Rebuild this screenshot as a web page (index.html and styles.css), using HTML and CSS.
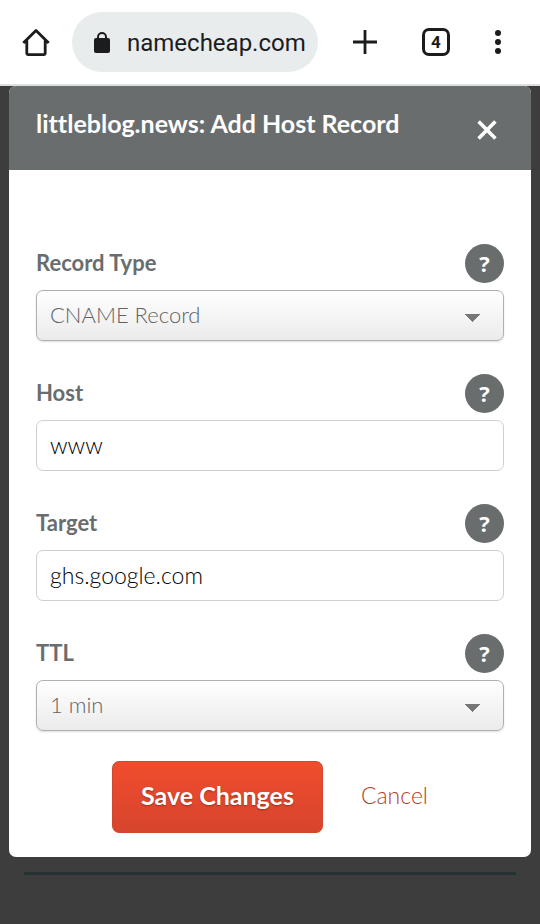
FILE: index.html
```html
<!DOCTYPE html>
<html lang="en">
<head>
<meta charset="utf-8">
<meta name="viewport" content="width=device-width, initial-scale=1">
<title>Add Host Record</title>
<link rel="stylesheet" href="styles.css">
</head>
<body>
<header class="browser-bar">
  <button class="bar-button" type="button" aria-label="Home">
    <svg width="28" height="28" viewBox="0 0 28 28" fill="none" stroke="#1b1c1d" stroke-width="2.8" stroke-linejoin="round"><path d="M1.3 15 14 2.6 26.7 15M4.8 12.5V25q0 1.6 1.6 1.6h15.2q1.6 0 1.6-1.6V12.5"/></svg>
  </button>
  <button class="address" type="button">
    <svg width="16" height="22" viewBox="0 0 16 22"><path d="M4 8V5a4 4 0 0 1 8 0V8" fill="none" stroke="#1b1c1d" stroke-width="2"/><rect y="6" width="16" height="15" rx="2" fill="#1b1c1d"/></svg>
    <span>namecheap.com</span>
  </button>
  <div class="bar-actions">
    <button class="bar-button" type="button" aria-label="New tab">
      <svg width="24" height="24" viewBox="0 0 24 24" stroke="#1b1c1d" stroke-width="2.8"><path d="M12 0v24M0 12h24"/></svg>
    </button>
    <button class="bar-button tabs" type="button" aria-label="Open tabs">4</button>
    <button class="bar-button" type="button" aria-label="Menu">
      <svg width="6" height="24" viewBox="0 0 6 24" fill="#1b1c1d"><circle cx="3" cy="3" r="3"/><circle cx="3" cy="12" r="3"/><circle cx="3" cy="21" r="3"/></svg>
    </button>
  </div>
</header>
<main class="page">
  <form class="dialog">
    <div class="dialog-header">
      <h1>littleblog.news: Add Host Record</h1>
      <button class="close" type="button" aria-label="Close">
        <svg width="20" height="20" viewBox="0 0 20 20" stroke="#fff" stroke-width="3.6"><path d="m1.6 1.6 16.8 16.8m0-16.8L1.6 18.4"/></svg>
      </button>
    </div>
    <div class="dialog-body">
      <div class="fields">
        <div class="field">
          <div class="field-top"><label for="type">Record Type</label><button class="help" type="button">?</button></div>
          <select class="control" id="type"><option>CNAME Record</option></select>
        </div>
        <div class="field">
          <div class="field-top"><label for="host">Host</label><button class="help" type="button">?</button></div>
          <input class="control" id="host" type="text" value="www">
        </div>
        <div class="field">
          <div class="field-top"><label for="target">Target</label><button class="help" type="button">?</button></div>
          <input class="control" id="target" type="text" value="ghs.google.com">
        </div>
        <div class="field">
          <div class="field-top"><label for="ttl">TTL</label><button class="help" type="button">?</button></div>
          <select class="control" id="ttl"><option>1 min</option></select>
        </div>
      </div>
      <div class="actions">
        <button class="save" type="submit">Save Changes</button>
        <a class="cancel" href="#">Cancel</a>
      </div>
    </div>
  </form>
  <hr class="divider">
</main>
</body>
</html>
```
FILE: styles.css
```css
* { box-sizing: border-box; }

body {
  margin: 0;
  min-height: 100vh;
  background: #3d3d3d;
  font-family: Lato, "Open Sans", sans-serif;
  font-variant-ligatures: none;
}

button { border: 0; padding: 0; background: none; font-family: inherit; cursor: pointer; }
svg { display: block; }

.browser-bar {
  display: flex;
  align-items: center;
  padding: 12px 39px 12px 22px;
  background: #fff;
  border-bottom: 2px solid #dcdedf;
}

.bar-button { flex: none; }

.address {
  display: flex;
  flex: 1;
  align-items: center;
  gap: 17px;
  height: 60px;
  margin-left: 22px;
  padding: 2px 12px 0 22px;
  border-radius: 30px;
  background: #e8eced;
  color: #1b1c1d;
  font: 24px Roboto, sans-serif;
}

.bar-actions {
  display: grid;
  grid-template-columns: 24px 28px 6px;
  align-items: center;
  column-gap: 45px;
  margin-left: 35px;
}

.tabs {
  width: 28px;
  height: 28px;
  border: 3px solid #1b1c1d;
  border-radius: 7px;
  color: #1b1c1d;
  font: bold 17px/22px Roboto, sans-serif;
}

.page { padding: 0 9px; }

.dialog { overflow: hidden; border-radius: 7px; background: #fff; }

.dialog-header {
  display: flex;
  justify-content: space-between;
  padding: 21px 34px 30px 27px;
  background: #696d6e;
  color: #fff;
}

h1 { margin: 0; font-size: 25px; line-height: 33px; font-weight: 700; }

.close { align-self: flex-end; }

.dialog-body { padding: 74px 27px 24px; }

.fields { display: grid; gap: 33px; }

.field-top {
  display: flex;
  align-items: center;
  justify-content: space-between;
  margin-bottom: 7px;
}

label { padding-bottom: 2px; color: #696d6e; font-size: 22px; font-weight: 700; }

.help {
  width: 39px;
  height: 39px;
  padding-bottom: 2px;
  border-radius: 50%;
  background: #696d6e;
  color: #fff;
  font: bold 22px "Open Sans", sans-serif;
}

.control {
  display: block;
  width: 100%;
  height: 51px;
  padding: 0 13px 2px;
  border: 1px solid #cfcfcf;
  border-radius: 7px;
  background: #fff;
  color: #000;
  font: 300 23px Lato, "Open Sans", sans-serif;
}

select.control {
  appearance: none;
  border-color: #b0b0b0;
  background:
    linear-gradient(to bottom right, #777 50%, transparent 50%) right 22px top 23px / 8px 8px no-repeat,
    linear-gradient(to bottom left, #777 50%, transparent 50%) right 30px top 23px / 8px 8px no-repeat,
    linear-gradient(#fff, #ebebeb);
  box-shadow: 0 1px 2px #0002;
  color: #5f6364;
  font-size: 22px;
}

.actions {
  display: flex;
  align-items: center;
  justify-content: center;
  gap: 38px;
  margin-top: 30px;
}

.save {
  height: 72px;
  padding: 0 28px 4px;
  border: 1px solid #d0472f;
  border-radius: 7px;
  background: linear-gradient(#f14c2d, #d6452d);
  color: #fff;
  font-size: 25px;
  font-weight: 700;
  text-shadow: 0 1px 2px #0005;
}

.cancel { padding-bottom: 4px; color: #b83c26; font-size: 23px; font-weight: 300; text-decoration: none; }

.divider { height: 3px; margin: 15px; border: 0; background: #263232; }
```
